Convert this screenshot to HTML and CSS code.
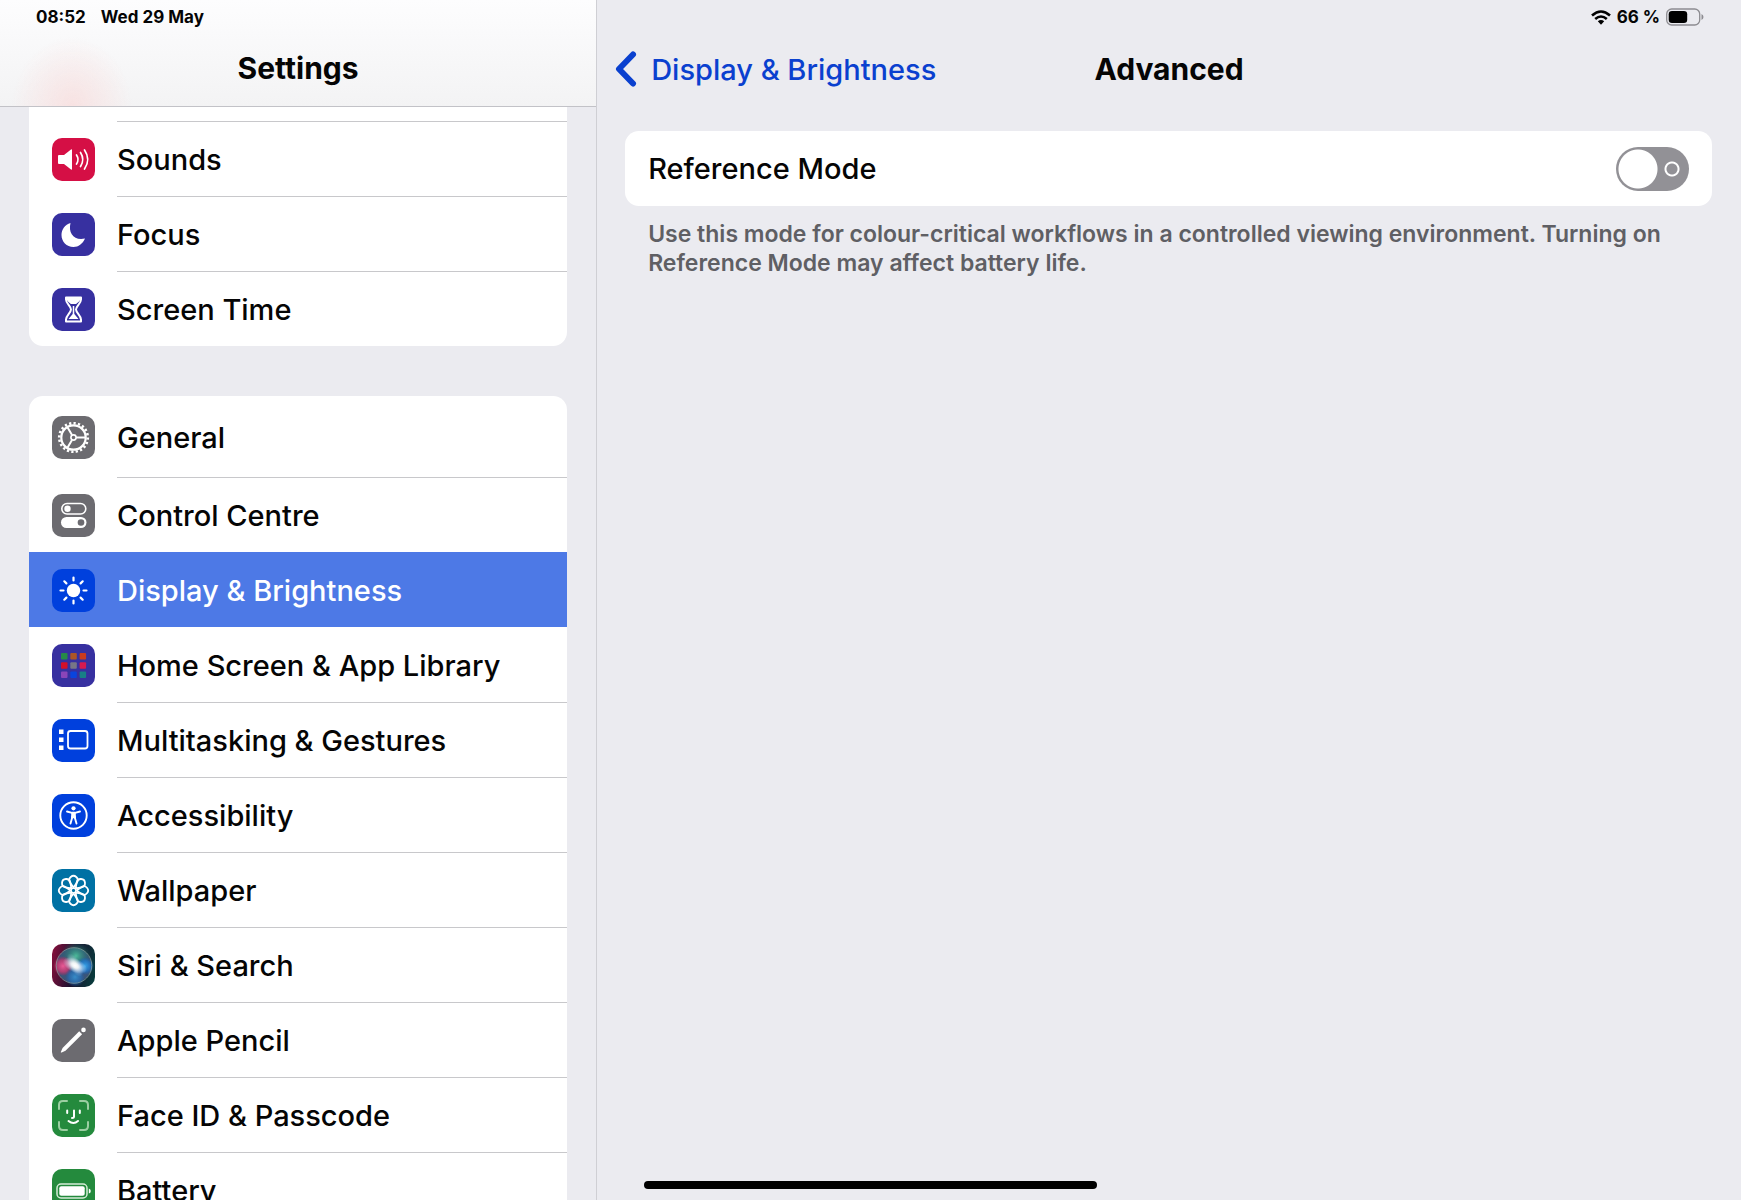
FILE: index.html
```html
<!DOCTYPE html>
<html lang="en-GB">

<head>
    <meta charset="UTF-8">
    <meta name="viewport" content="width=device-width, initial-scale=1.0">
    <title>Settings</title>
    <link rel="stylesheet" href="styles.css">
</head>

<body>
    <div class="settings">
        <aside class="sidebar">
            <header class="sidebar-header">
                <div class="status"><span>08:52</span><span>Wed 29 May</span></div>
                <h1 class="title">Settings</h1>
            </header>

            <nav class="menu">
                <div class="group group-cut">
                    <a href="#" class="item">
                        <svg class="icon red" viewBox="0 0 43 43">
                            <path d="M7 17h5l7-5.500q1-.5 1 .5v19q0 1-1 .5L12 26H7q-1 0-1-1v-7q0-1 1-1z" fill="#fff"/>
                            <path d="M24.500 17q3 4.500 0 9M28.500 14.500q4.500 7 0 14M32.500 12q6.500 9.500 0 19" fill="none" stroke="#fff" stroke-width="1.700" stroke-linecap="round"/>
                        </svg>
                        <span class="label">Sounds</span>
                    </a>
                    <a href="#" class="item">
                        <svg class="icon indigo" viewBox="0 0 43 43">
                            <path d="M18.500 10C16 20 22 28 33 25.500C30.500 31 26.500 34 21.500 34C14.500 34 9.500 28.500 9.500 22C9.500 16.500 13 11.500 18.500 10z" fill="#fff"/>
                        </svg>
                        <span class="label">Focus</span>
                    </a>
                    <a href="#" class="item">
                        <svg class="icon indigo" viewBox="0 0 43 43">
                            <path d="M14 9.500h15v2c0 4-5 7-5 10s5 6 5 10v2H14v-2c0-4 5-7 5-10s-5-6-5-10z" fill="none" stroke="#fff" stroke-width="2" stroke-linejoin="round"/>
                            <path d="M14.500 10h14c0 3-2.500 4.500-4.500 6h-5c-2-1.500-4.500-3-4.500-6zM21.500 25l5 6h-10z" fill="#fff"/>
                            <path d="M21.500 18v8" stroke="#fff" stroke-width="1.500"/>
                        </svg>
                        <span class="label">Screen Time</span>
                    </a>
                </div>

                <div class="group">
                    <a href="#" class="item item-first">
                        <svg class="icon grey" viewBox="0 0 43 43">
                            <g fill="none" stroke="#fff">
                                <circle cx="21.500" cy="21.500" r="14.300" stroke-width="2.600" pathLength="40" stroke-dasharray="1 1"/>
                                <circle cx="21.500" cy="21.500" r="12.200" stroke-width="2.200"/>
                                <circle cx="21.500" cy="21.500" r="2.600" stroke-width="1.600"/>
                                <path d="M24 21.500h10M20 19l-5-8.500M20 24l-5 8.500" stroke-width="2"/>
                            </g>
                        </svg>
                        <span class="label">General</span>
                    </a>
                    <a href="#" class="item">
                        <svg class="icon grey" viewBox="0 0 43 43">
                            <rect x="9.800" y="9.500" width="24" height="10.500" rx="5.250" fill="none" stroke="#fff" stroke-width="1.600"/>
                            <circle cx="15.500" cy="14.700" r="3.200" fill="#fff"/>
                            <rect x="9" y="23" width="25.500" height="11" rx="5.500" fill="#fff"/>
                            <circle cx="29" cy="28.500" r="3.300" fill="#6c6b70"/>
                        </svg>
                        <span class="label">Control Centre</span>
                    </a>
                    <a href="#" class="item item-active" aria-current="page">
                        <svg class="icon blue" viewBox="0 0 43 43">
                            <circle cx="21.500" cy="21.500" r="6.700" fill="#fff"/>
                            <path d="M21.500 8.500v3M21.500 31.500v3M8.500 21.500h3M31.500 21.500h3M12.300 12.300l2.100 2.100M28.600 28.600l2.100 2.100M12.300 30.700l2.100-2.100M28.600 14.400l2.100-2.100" stroke="#fff" stroke-width="2.200" stroke-linecap="round"/>
                        </svg>
                        <span class="label">Display &amp; Brightness</span>
                    </a>
                    <a href="#" class="item">
                        <svg class="icon indigo" viewBox="0 0 43 43">
                            <rect x="9" y="9" width="6.500" height="6.500" rx="1" fill="#268a48"/>
                            <rect x="18.300" y="9" width="6.500" height="6.500" rx="1" fill="#ad5626"/>
                            <rect x="27.600" y="9" width="6.500" height="6.500" rx="1" fill="#c93b1e"/>
                            <rect x="9" y="18.300" width="6.500" height="6.500" rx="1" fill="#d4102a"/>
                            <rect x="18.300" y="18.300" width="6.500" height="6.500" rx="1" fill="#777686"/>
                            <rect x="27.600" y="18.300" width="6.500" height="6.500" rx="1" fill="#d51a50"/>
                            <rect x="9" y="27.600" width="6.500" height="6.500" rx="1" fill="#8a45b8"/>
                            <rect x="18.300" y="27.600" width="6.500" height="6.500" rx="1" fill="#0a44de"/>
                            <rect x="27.600" y="27.600" width="6.500" height="6.500" rx="1" fill="#187f86"/>
                        </svg>
                        <span class="label">Home Screen &amp; App Library</span>
                    </a>
                    <a href="#" class="item">
                        <svg class="icon blue" viewBox="0 0 43 43">
                            <path d="M7 10.500h4.500v4.500H7zM7 18.500h4.500v4.500H7zM7 26.500h4.500v4.500H7z" fill="#fff"/>
                            <rect x="16" y="12" width="19.500" height="17.500" rx="2.500" fill="none" stroke="#fff" stroke-width="1.800"/>
                        </svg>
                        <span class="label">Multitasking &amp; Gestures</span>
                    </a>
                    <a href="#" class="item">
                        <svg class="icon blue" viewBox="0 0 43 43">
                            <circle cx="21.500" cy="21.500" r="13.200" fill="none" stroke="#fff" stroke-width="1.900"/>
                            <circle cx="21.500" cy="14.300" r="2.100" fill="#fff"/>
                            <path d="M15 17.500l5 1.300h3l5-1.300M18.500 29.500l2-7h2l2 7" fill="none" stroke="#fff" stroke-width="1.900" stroke-linecap="round" stroke-linejoin="round"/>
                            <path d="M19.300 18.300h4.400l.3 6h-5z" fill="#fff"/>
                        </svg>
                        <span class="label">Accessibility</span>
                    </a>
                    <a href="#" class="item">
                        <svg class="icon teal" viewBox="0 0 43 43">
                            <defs>
                                <path id="petal" d="M21.500 18.500L18 13.500a4.200 4.200 0 1 1 7 0z"/>
                            </defs>
                            <g fill="none" stroke="#fff" stroke-width="1.800">
                                <use href="#petal"/>
                                <use href="#petal" transform="rotate(45 21.500 21.500)"/>
                                <use href="#petal" transform="rotate(90 21.500 21.500)"/>
                                <use href="#petal" transform="rotate(135 21.500 21.500)"/>
                                <use href="#petal" transform="rotate(180 21.500 21.500)"/>
                                <use href="#petal" transform="rotate(225 21.500 21.500)"/>
                                <use href="#petal" transform="rotate(270 21.500 21.500)"/>
                                <use href="#petal" transform="rotate(315 21.500 21.500)"/>
                                <circle cx="21.500" cy="21.500" r="2.500" stroke-width="1.400"/>
                            </g>
                        </svg>
                        <span class="label">Wallpaper</span>
                    </a>
                    <a href="#" class="item">
                        <svg class="icon siri" viewBox="0 0 43 43">
                            <defs>
                                <radialGradient id="glow">
                                    <stop offset="0" stop-color="#fff"/>
                                    <stop offset=".3" stop-color="#fff" stop-opacity=".85"/>
                                    <stop offset="1" stop-color="#cfe6ff" stop-opacity="0"/>
                                </radialGradient>
                                <radialGradient id="pink">
                                    <stop offset="0" stop-color="#ea5a96"/>
                                    <stop offset=".6" stop-color="#c93a72" stop-opacity=".8"/>
                                    <stop offset="1" stop-color="#c41f5c" stop-opacity="0"/>
                                </radialGradient>
                                <radialGradient id="azure">
                                    <stop offset="0" stop-color="#37a4ea"/>
                                    <stop offset=".6" stop-color="#2176c8" stop-opacity=".8"/>
                                    <stop offset="1" stop-color="#1460b8" stop-opacity="0"/>
                                </radialGradient>
                                <radialGradient id="green">
                                    <stop offset="0" stop-color="#4dbb9a"/>
                                    <stop offset="1" stop-color="#0f6d62" stop-opacity="0"/>
                                </radialGradient>
                            </defs>
                            <circle cx="22" cy="21.500" r="17.500" fill="#3b5478"/>
                            <circle cx="24" cy="12" r="15" fill="url(#green)"/>
                            <circle cx="11" cy="22" r="10" fill="url(#pink)"/>
                            <circle cx="33" cy="22" r="9" fill="url(#azure)"/>
                            <circle cx="23" cy="33" r="10" fill="url(#azure)" opacity=".7"/>
                            <ellipse cx="23" cy="21.500" rx="13" ry="7" fill="url(#glow)" transform="rotate(25 23 21.500)"/>
                            <ellipse cx="23" cy="21" rx="6" ry="13" fill="url(#glow)" opacity=".6" transform="rotate(-30 23 21)"/>
                            <circle cx="22" cy="21.500" r="17.800" fill="none" stroke="#8fa9a6" stroke-opacity=".7"/>
                        </svg>
                        <span class="label">Siri &amp; Search</span>
                    </a>
                    <a href="#" class="item">
                        <svg class="icon grey" viewBox="0 0 43 43">
                            <path d="M27.200 12.300l2.900 2.900L13.500 31.800l-3.800 1.700q-1.200.3-.8-.8l1.700-3.800z" fill="#fff"/>
                            <circle cx="31.500" cy="10.900" r="2.300" fill="#fff"/>
                        </svg>
                        <span class="label">Apple Pencil</span>
                    </a>
                    <a href="#" class="item">
                        <svg class="icon green" viewBox="0 0 43 43">
                            <g fill="none" stroke-linecap="round" stroke-width="2">
                                <path d="M7 15v-4q0-4 4-4h4M28 7h4q4 0 4 4v4M36 28v4q0 4-4 4h-4M15 36h-4q-4 0-4-4v-4" stroke="#9ccfa2"/>
                                <path d="M15.200 16.500v2.500M27.800 16.500v2.500M22 16.500v6q0 1.500-2 1.500M16.500 27q5 4 9.500 0" stroke="#fff"/>
                            </g>
                        </svg>
                        <span class="label">Face ID &amp; Passcode</span>
                    </a>
                    <a href="#" class="item">
                        <svg class="icon green" viewBox="0 0 43 43">
                            <rect x="5" y="15" width="30" height="14" rx="4" fill="none" stroke="#d5ecd7" stroke-width="1.500"/>
                            <rect x="7.300" y="17.300" width="25.400" height="9.400" rx="2" fill="#fff"/>
                            <path d="M36.800 19.500q2 .5 2 2.500t-2 2.500z" fill="#fff"/>
                        </svg>
                        <span class="label">Battery</span>
                    </a>
                </div>
            </nav>
        </aside>

        <main class="detail">
            <div class="status status-right">
                <svg viewBox="0 0 20 15" width="20" height="15">
                    <g fill="none" stroke="#000" stroke-width="2.600">
                        <path d="M1 5.500q9-8 18 0"/>
                        <path d="M4.200 9q5.800-5 11.600 0"/>
                    </g>
                    <path d="M6.800 11.300q3.200-2.600 6.400 0L10 14.800z"/>
                </svg>
                <span>66 %</span>
                <svg viewBox="0 0 38 18" width="38" height="18">
                    <rect x=".7" y="1" width="33" height="16" rx="5" fill="none" stroke="#8d8c91" stroke-width="1.300"/>
                    <rect x="2.700" y="3" width="18.500" height="12" rx="3.300"/>
                    <path d="M35.500 6q2 .8 2 3t-2 3z" fill="#8d8c91"/>
                </svg>
            </div>

            <header class="detail-header">
                <a href="#" class="back">
                    <svg viewBox="0 0 22 36" width="22" height="36">
                        <path d="M18 3.500L4 18l14 14.500" fill="none" stroke="currentColor" stroke-width="6" stroke-linecap="round" stroke-linejoin="round"/>
                    </svg>
                    <span>Display &amp; Brightness</span>
                </a>
                <h2 class="title">Advanced</h2>
            </header>

            <section class="option">
                <div class="option-row">
                    <label for="reference-mode">Reference Mode</label>
                    <input type="checkbox" role="switch" class="switch" id="reference-mode" aria-describedby="reference-note">
                </div>
                <p class="note" id="reference-note">Use this mode for colour-critical workflows in a controlled viewing environment. Turning on Reference Mode may affect battery life.</p>
            </section>
        </main>
    </div>
    <div class="home-bar"></div>
</body>

</html>
```
FILE: styles.css
```css
* {
    box-sizing: border-box;
}

body {
    margin: 0;
    height: 100vh;
    overflow: hidden;
    background-color: #ebebf0;
    color: #050505;
    font-family: Inter, "Liberation Sans", sans-serif;
    font-size: 29px;
    font-weight: 500;
}

a {
    color: inherit;
    text-decoration: none;
}

.settings {
    display: grid;
    grid-template-columns: 34.3% 1fr;
    height: 100vh;
}

.status {
    display: flex;
    align-items: center;
    gap: 15px;
    height: 34px;
    font-size: 17px;
    font-weight: 700;
}

.title {
    margin: 0;
    font-size: 30px;
    font-weight: 700;
    line-height: 36px;
    text-align: center;
}

/* left column */
.sidebar {
    display: flex;
    flex-direction: column;
    height: 100vh;
    overflow: hidden;
    border-right: 1px solid #cfcfd4;
}

.sidebar-header {
    flex: none;
    height: 107px;
    border-bottom: 1px solid #c2c2c7;
    background-image: radial-gradient(ellipse 60px 70px at 72px 107px, #f8e2e2, rgba(248, 226, 226, 0)), linear-gradient(#fdfdfe, #f3f3f4);
}

.sidebar-header .status {
    padding-left: 36px;
}

.sidebar-header .title {
    margin-top: 16px;
}

.menu {
    display: flex;
    flex-direction: column;
    gap: 50px;
    padding: 0 29px;
}

.group {
    flex: none;
    overflow: hidden;
    border-radius: 14px;
    background-color: #fff;
}

/* this one is scrolled under the header */
.group-cut {
    padding-top: 14px;
    border-radius: 0 0 14px 14px;
}

.item {
    display: flex;
    align-items: center;
    gap: 22px;
    height: 75px;
    padding-left: 23px;
}

.label {
    flex: 1;
    height: 75px;
    border-top: 1px solid #c8c8cb;
    line-height: 75px;
    white-space: nowrap;
}

.item-first {
    height: 81px;
}

.item-first .label,
.item-active .label,
.item-active + .item .label {
    border-color: transparent;
}

.item-active {
    background-color: #4d79e6;
    color: #fff;
}

.icon {
    flex: none;
    width: 43px;
    height: 43px;
    margin-top: 1px;
    border-radius: 10px;
}

.red {
    background-color: #d50f45;
}

.indigo {
    background-color: #3730a0;
}

.grey {
    background-color: #6c6b70;
}

.blue {
    background-color: #0040dd;
}

.teal {
    background-color: #0071a4;
}

.green {
    background-color: #248a3d;
}

.siri {
    background-image: linear-gradient(100deg, #8a0f3c, #1c1230 50%, #063f3d);
}

/* right column */
.status-right {
    justify-content: flex-end;
    gap: 6px;
    padding-right: 37px;
}

.detail-header {
    display: grid;
    grid-template-columns: 1fr auto 1fr;
    align-items: center;
    height: 70px;
    padding: 0 18px;
}

.back {
    display: flex;
    align-items: center;
    gap: 14px;
    color: #0a40cf;
    white-space: nowrap;
}

.option {
    padding: 27px 29px 0 28px;
}

.option-row {
    display: flex;
    align-items: center;
    justify-content: space-between;
    height: 75px;
    padding: 0 23px;
    border-radius: 14px;
    background-color: #fff;
}

.switch {
    appearance: none;
    width: 73px;
    height: 44px;
    margin: 0;
    border-radius: 22px;
    background-color: #929196;
    background-image: radial-gradient(circle at 22px 22px, #fff 19px, transparent 20px), radial-gradient(circle at 56px 22px, transparent 5px, #fff 6px, #fff 7px, transparent 8px);
    cursor: pointer;
}

.switch:checked {
    background-color: #248a3d;
    background-image: radial-gradient(circle at 51px 22px, #fff 19px, transparent 20px);
}

.note {
    margin: 14px 23px 0;
    color: #5f5f64;
    font-size: 23px;
    font-weight: 600;
    line-height: 29px;
}

.home-bar {
    position: fixed;
    bottom: 11px;
    left: 37%;
    width: 26%;
    height: 8px;
    border-radius: 4px;
    background-color: #000;
}
```
